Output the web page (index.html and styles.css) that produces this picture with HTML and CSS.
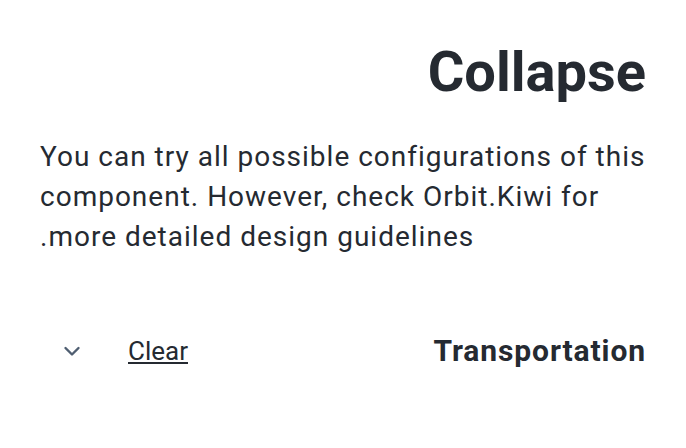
FILE: index.html
```html
<!DOCTYPE html>
<html dir="rtl">
<head>
<meta charset="utf-8">
<link rel="stylesheet" href="styles.css">
</head>
<body>
<main class="page">
  <h1 class="title">Collapse</h1>
  <p class="intro">You can try all possible configurations of this component. However, check Orbit.Kiwi for more detailed design guidelines.</p>
  <div class="collapse">
    <div class="collapse-header">
      <h2 class="collapse-title">Transportation</h2>
      <div class="collapse-actions">
        <a class="clear" href="#">Clear</a>
        <span class="chevron">
          <svg width="24" height="24" viewBox="0 0 24 24"><path d="M5.5 9l6.5 6.5 6.5-6.5" fill="none" stroke="#4f5e71" stroke-width="2.4" stroke-linecap="round" stroke-linejoin="round"/></svg>
        </span>
      </div>
    </div>
  </div>
</main>
</body>
</html>
```
FILE: styles.css
```css
html, body {
  margin: 0;
  padding: 0;
  background: #ffffff;
}
body {
  font-family: Roboto, "Liberation Sans", sans-serif;
  color: #252a31;
}
.page {
  padding: 40px 40px;
}
.title {
  margin: 0;
  font-size: 56px;
  line-height: 64px;
  font-weight: 700;
  text-align: right;
}
.intro {
  margin: 33px 0 0;
  font-size: 28px;
  letter-spacing: 1px;
  line-height: 40px;
  text-align: left;
}
.collapse {
  margin-top: 74px;
}
.collapse-header {
  display: flex;
  justify-content: space-between;
  align-items: center;
}
.collapse-title {
  margin: 0;
  font-size: 30px;
  letter-spacing: 0.9px;
  line-height: 40px;
  font-weight: 700;
}
.collapse-actions {
  display: flex;
  align-items: center;
  gap: 44px;
}
.clear {
  color: #252a31;
  font-size: 26px;
  line-height: 40px;
  text-decoration: underline;
}
.chevron {
  display: flex;
  width: 24px;
  height: 24px;
  margin-left: 20px;
}
```
